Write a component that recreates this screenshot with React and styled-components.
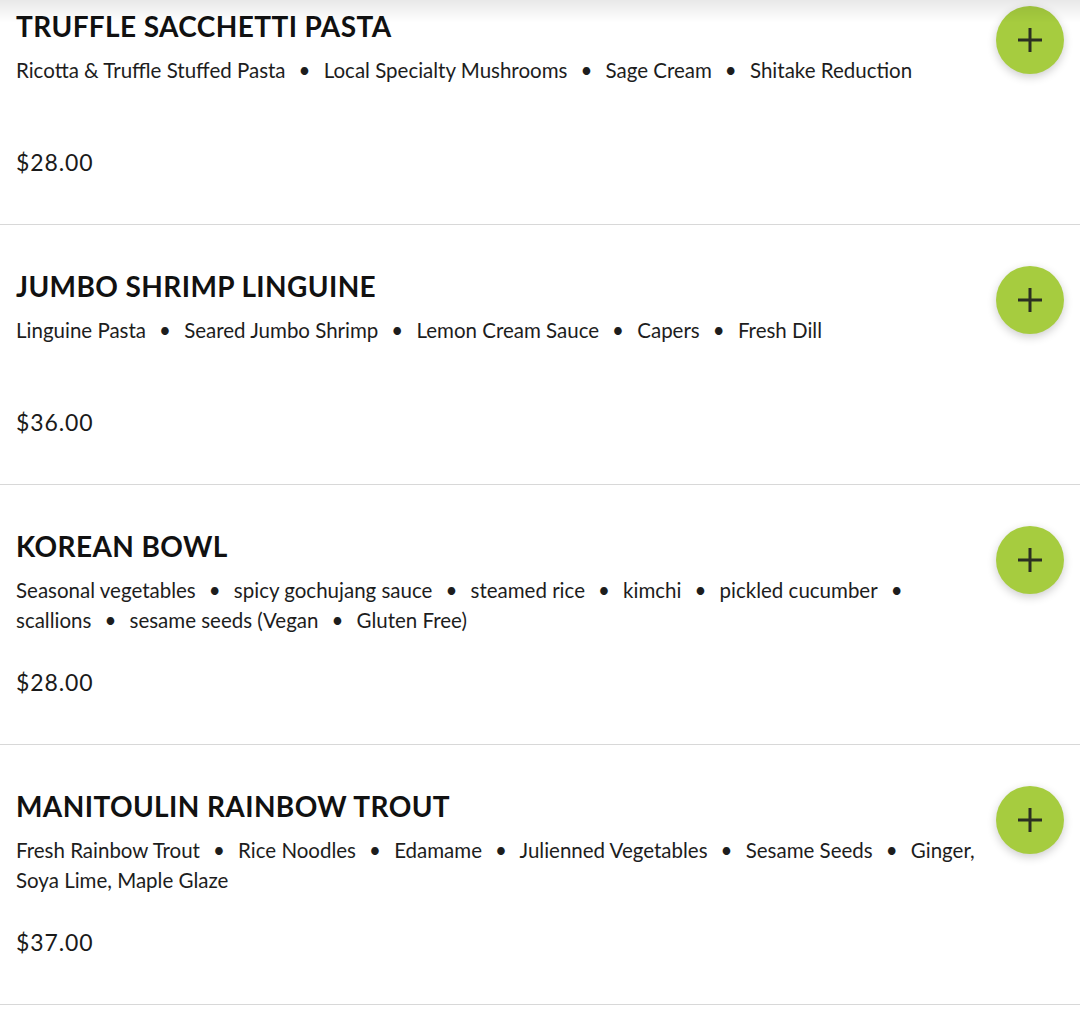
import React from 'react';
import styled, { createGlobalStyle } from 'styled-components';

const GlobalStyle = createGlobalStyle`
   html, body {
      margin: 0;
      padding: 0;
      background: #fff;
      overflow: hidden;
   }
   body {
      font-family: Lato, "Noto Sans", sans-serif;
      color: #151515;
   }
`;

const items = [
   {
      name: 'Truffle Sacchetti Pasta',
      ingredients: ['Ricotta & Truffle Stuffed Pasta', 'Local Specialty Mushrooms', 'Sage Cream', 'Shitake Reduction'],
      price: '$28.00',
   },
   {
      name: 'Jumbo Shrimp Linguine',
      ingredients: ['Linguine Pasta', 'Seared Jumbo Shrimp', 'Lemon Cream Sauce', 'Capers', 'Fresh Dill'],
      price: '$36.00',
   },
   {
      name: 'Korean Bowl',
      ingredients: ['Seasonal vegetables', 'spicy gochujang sauce', 'steamed rice', 'kimchi', 'pickled cucumber', 'scallions', 'sesame seeds (Vegan', 'Gluten Free)'],
      price: '$28.00',
   },
   {
      name: 'Manitoulin Rainbow Trout',
      ingredients: ['Fresh Rainbow Trout', 'Rice Noodles', 'Edamame', 'Julienned Vegetables', 'Sesame Seeds', 'Ginger, Soya Lime, Maple Glaze'],
      price: '$37.00',
   },
];

const PlusIcon = () => (
   <svg width="26" height="26" viewBox="0 0 26 26">
      <path d="M13 1v24M1 13h24" stroke="#2b2f22" strokeWidth="3" fill="none" />
   </svg>
);

// the bullet sticks to the word before it, so a line never starts with one
const MenuItem = ({ item }) => (
   <Item>
      <Info>
         <Name>{item.name}</Name>
         <Description>
            {item.ingredients.map((ing, i) => (
               <React.Fragment key={i}>
                  {ing}
                  {i < item.ingredients.length - 1 && <><Dot>•</Dot> </>}
               </React.Fragment>
            ))}
         </Description>
         <Price>{item.price}</Price>
      </Info>
      <AddButton aria-label={`Add ${item.name}`}>
         <PlusIcon />
      </AddButton>
   </Item>
);

export default function App() {
   return (
      <Page>
         <GlobalStyle />
         <TopShadow />
         <List>
            {items.map((item) => (
               <MenuItem key={item.name} item={item} />
            ))}
         </List>
      </Page>
   );
}

const Page = styled.div`
   width: 1080px;
   height: 1032px;
   overflow: hidden;
   background: #fff;
`;

// header above the viewport casts a soft shadow
const TopShadow = styled.div`
   position: fixed;
   top: 0;
   left: 0;
   right: 0;
   height: 22px;
   background: linear-gradient(to bottom, rgba(0, 0, 0, 0.09), rgba(0, 0, 0, 0));
   pointer-events: none;
   z-index: 2;
`;

// list is scrolled a little: first card starts above the fold
const List = styled.div`
   margin-top: -35px;
`;

const Item = styled.div`
   display: flex;
   gap: 16px;
   padding: 0 16px;
   border-bottom: 1px solid #d8d8d8;
`;

const Info = styled.div`
   flex: 1;
   padding: 44px 0 47px;
`;

const Name = styled.h2`
   margin: 0;
   font-size: 28px;
   line-height: 34px;
   font-weight: 700;
   text-transform: uppercase;
   color: #111;
   letter-spacing: 0.4px;
`;

const Description = styled.p`
   margin: 12px 0 0;
   min-height: 60px;
   font-size: 20.5px;
   line-height: 30px;
   color: #1d1d1d;
`;

const Dot = styled.span`
   margin: 0 8px 0 13px;
`;

const Price = styled.div`
   margin-top: 32px;
   font-size: 23px;
   line-height: 30px;
   letter-spacing: 0.9px;
   color: #1a1a1a;
`;

const AddButton = styled.button`
   flex: none;
   width: 68px;
   height: 68px;
   margin-top: 41px;
   border: none;
   border-radius: 50%;
   background: #a6cc3f;
   box-shadow: 0 3px 10px rgba(0, 0, 0, 0.2);
   display: flex;
   align-items: center;
   justify-content: center;
   padding: 0;
   cursor: pointer;
`;
